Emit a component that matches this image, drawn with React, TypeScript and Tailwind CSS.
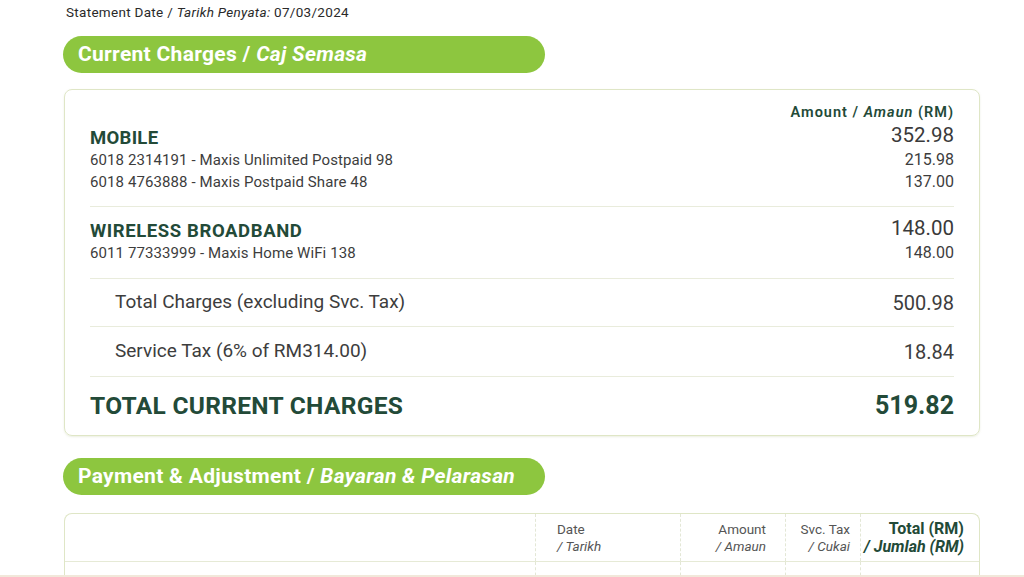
const GREEN_TEXT = "text-[#234a38]";

function Pill({ title, italic }: { title: string; italic: string }) {
  return (
    <div className="ml-[63px] flex h-[37px] w-[482px] items-center rounded-full bg-[#8dc63f] pl-[15px] text-[21px] font-bold tracking-[0.3px] text-white">
      <span>{title} /&nbsp;</span>
      <span className="italic">{italic}</span>
    </div>
  );
}

function Sub({ label, amount }: { label: string; amount: string }) {
  return (
    <div className="flex h-[22px] items-center justify-between text-[15px] text-[#3d3d3d]">
      <span className="tracking-[0.1px]">{label}</span>
      <span className="text-[16px]">{amount}</span>
    </div>
  );
}

export default function App() {
  return (
    <div
      className="flex h-[577px] w-[1024px] flex-col overflow-hidden border-b-2 border-[#f1e8da] bg-white"
      style={{ fontFamily: "Roboto, 'Liberation Sans', sans-serif" }}
    >
      <p className="pl-[66px] pt-[4px] text-[13.5px] leading-[16px] tracking-[0.3px] text-[#2a2a2a]">
        Statement Date / <span className="italic">Tarikh Penyata:</span> 07/03/2024
      </p>

      <div className="mt-[16px]">
        <Pill title="Current Charges" italic="Caj Semasa" />
      </div>

      {/* current charges card */}
      <div className="ml-[64px] mt-[16px] w-[916px] shrink-0 rounded-[8px] border border-[#dfe6c6] px-[25px] pt-[15px] shadow-[0_1px_2px_rgba(180,190,140,0.25)]">
        <div className={`h-[16px] text-right text-[14.5px] font-semibold leading-[16px] tracking-[1px] ${GREEN_TEXT}`}>
          Amount / <span className="italic">Amaun</span> (RM)
        </div>

        <div className="border-b border-[#e9ecdc] pb-[13px]">
          <div className="flex h-[28px] items-start justify-between">
            <span className={`mt-[7px] text-[18.5px] font-bold leading-[20px] tracking-[0.3px] ${GREEN_TEXT}`}>MOBILE</span>
            <span className="mt-[3px] text-[20.5px] leading-[22px] text-[#3a3a3a]">352.98</span>
          </div>
          <Sub label="6018 2314191 - Maxis Unlimited Postpaid 98" amount="215.98" />
          <Sub label="6018 4763888 - Maxis Postpaid Share 48" amount="137.00" />
        </div>

        <div className="border-b border-[#e9ecdc] pb-[14px]">
          <div className="flex h-[35px] items-start justify-between">
            <span className={`mt-[14px] text-[18.5px] font-bold leading-[20px] tracking-[0.6px] ${GREEN_TEXT}`}>WIRELESS BROADBAND</span>
            <span className="mt-[10px] text-[20.5px] leading-[22px] text-[#3a3a3a]">148.00</span>
          </div>
          <Sub label="6011 77333999 - Maxis Home WiFi 138" amount="148.00" />
        </div>

        <div className="flex h-[48px] items-center justify-between border-b border-[#e9ecdc] pl-[25px] text-[19px] text-[#3d3d3d]">
          <span>Total Charges (excluding Svc. Tax)</span>
          <span className="text-[20px]">500.98</span>
        </div>

        <div className="flex h-[50px] items-center justify-between border-b border-[#e9ecdc] pl-[25px] text-[19px] text-[#3d3d3d]">
          <span>Service Tax (6% of RM314.00)</span>
          <span className="text-[20px]">18.84</span>
        </div>

        <div className={`flex h-[58px] items-center justify-between text-[24.5px] font-bold ${GREEN_TEXT}`}>
          <span className="tracking-[0.3px]">TOTAL CURRENT CHARGES</span>
          <span className="text-[25px]">519.82</span>
        </div>
      </div>

      <div className="mt-[22px]">
        <Pill title="Payment & Adjustment" italic="Bayaran & Pelarasan" />
      </div>

      {/* payment & adjustment card */}
      <div className="ml-[64px] mt-[18px] w-[916px] shrink-0 rounded-t-[8px] border border-b-0 border-[#dfe6c6]">
        <div className="flex h-[48px] border-b border-[#e6ead6] text-[13.5px] leading-[17px] text-[#555]">
          <div className="w-[471px] border-r border-dashed border-[#e3e7d6]" />
          <div className="flex w-[145px] flex-col justify-center border-r border-dashed border-[#e3e7d6] pl-[21px]">
            <span>Date</span>
            <span className="italic">/ Tarikh</span>
          </div>
          <div className="flex w-[105px] flex-col justify-center border-r border-dashed border-[#e3e7d6] pr-[19px] text-right">
            <span>Amount</span>
            <span className="italic">/ Amaun</span>
          </div>
          <div className="flex w-[75px] flex-col justify-center border-r border-dashed border-[#e3e7d6] pr-[10px] text-right">
            <span>Svc. Tax</span>
            <span className="italic">/ Cukai</span>
          </div>
          <div className={`flex flex-1 flex-col justify-center pr-[15px] text-right text-[16px] font-bold leading-[18px] ${GREEN_TEXT}`}>
            <span>Total (RM)</span>
            <span className="italic">/ Jumlah (RM)</span>
          </div>
        </div>
        <div className="flex h-[40px]">
          <div className="w-[471px] border-r border-dashed border-[#e3e7d6]" />
          <div className="w-[145px] border-r border-dashed border-[#e3e7d6]" />
          <div className="w-[105px] border-r border-dashed border-[#e3e7d6]" />
          <div className="w-[75px] border-r border-dashed border-[#e3e7d6]" />
          <div className="flex-1" />
        </div>
      </div>
    </div>
  );
}
